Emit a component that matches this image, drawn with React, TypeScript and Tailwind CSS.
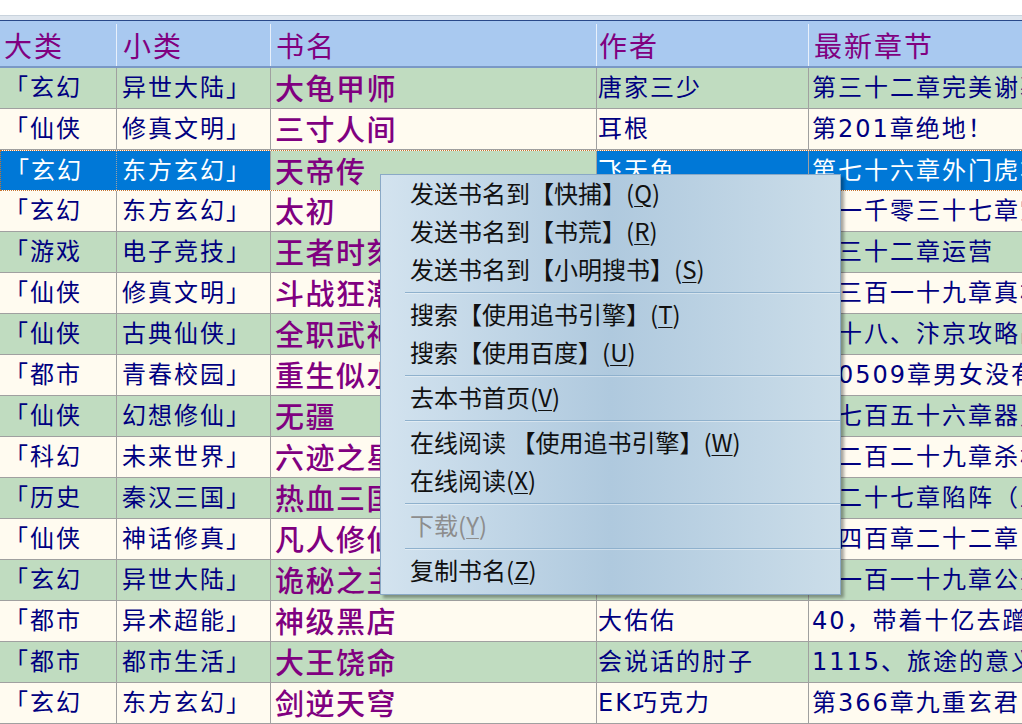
import React from 'react';

type Row = [string, string, string, string, string];

const rows: Row[] = [
  ['「玄幻', '异世大陆」', '大龟甲师', '唐家三少', '第三十二章完美谢幕'],
  ['「仙侠', '修真文明」', '三寸人间', '耳根', '第201章绝地！'],
  ['「玄幻', '东方玄幻」', '天帝传', '飞天鱼', '第七十六章外门虎将'],
  ['「玄幻', '东方玄幻」', '太初', '高楼大厦', '第一千零三十七章空间'],
  ['「游戏', '电子竞技」', '王者时刻', '蝴蝶蓝', '第三十二章运营'],
  ['「仙侠', '修真文明」', '斗战狂潮', '骷髅精灵', '第三百一十九章真相'],
  ['「仙侠', '古典仙侠」', '全职武神', '乱世狂刀', '第十八、汴京攻略战'],
  ['「都市', '青春校园」', '重生似水', '青衫取醉', '第0509章男女没有'],
  ['「仙侠', '幻想修仙」', '无疆', '小刀锋利', '第七百五十六章器灵'],
  ['「科幻', '未来世界」', '六迹之星', '夜箫', '第二百二十九章杀机'],
  ['「历史', '秦汉三国」', '热血三国', '寂寞剑客', '第二十七章陷阵（上）'],
  ['「仙侠', '神话修真」', '凡人修仙传', '忘语', '第四百章二十二章'],
  ['「玄幻', '异世大陆」', '诡秘之主', '爱潜水的乌贼', '第一百一十九章公开'],
  ['「都市', '异术超能」', '神级黑店', '大佑佑', '40，带着十亿去蹭饭'],
  ['「都市', '都市生活」', '大王饶命', '会说话的肘子', '1115、旅途的意义'],
  ['「玄幻', '东方玄幻」', '剑逆天穹', 'EK巧克力', '第366章九重玄君'],
];

const SELECTED = 2;

type MenuEntry = { label: string; key: string; disabled?: boolean } | 'sep';

const menu: MenuEntry[] = [
  { label: '发送书名到【快捕】(', key: 'Q' },
  { label: '发送书名到【书荒】(', key: 'R' },
  { label: '发送书名到【小明搜书】(', key: 'S' },
  'sep',
  { label: '搜索【使用追书引擎】(', key: 'T' },
  { label: '搜索【使用百度】(', key: 'U' },
  'sep',
  { label: '去本书首页(', key: 'V' },
  'sep',
  { label: '在线阅读 【使用追书引擎】(', key: 'W' },
  { label: '在线阅读(', key: 'X' },
  'sep',
  { label: '下载(', key: 'Y', disabled: true },
  'sep',
  { label: '复制书名(', key: 'Z' },
];

const cols = 'grid grid-cols-[117px_154px_326px_212px_1fr]';

const BookRow = ({ row, index }: { row: Row; index: number }) => {
  const selected = index === SELECTED;
  const bg = index % 2 === 0 ? 'bg-[#c0dcc0]' : 'bg-[#fffbf0]';
  const cell = selected ? 'bg-[#0078d7] text-white' : `${bg} text-[#000080]`;
  const rowBorder = selected
    ? 'border-y border-dotted border-[#c8742c]'
    : 'border-b border-[#a0a0a0]';

  return (
    <div className={`${cols} h-[41px] ${rowBorder} font-['DejaVu_Sans','Noto_Sans_CJK_SC',sans-serif] whitespace-nowrap overflow-hidden`}>
      <div className={`${cell} flex items-center pl-[4px] text-[24px] tracking-[2px] border-r border-[#a0a0a0] ${selected ? 'border-l border-l-[#c8742c] border-dotted' : ''}`}>
        {row[0]}
      </div>
      <div className={`${cell} flex items-center pl-[5px] text-[24px] tracking-[2px] border-r border-[#a0a0a0]`}>
        {row[1]}
      </div>
      <div className={`${bg} flex items-center pl-[4px] text-[29px] tracking-[1.5px] font-medium text-[#800080] border-r border-[#a0a0a0] font-['Noto_Sans_CJK_SC',sans-serif] overflow-hidden`}>
        {row[2]}
      </div>
      <div className={`${cell} flex items-center pl-[1px] text-[24px] tracking-[2px] border-r border-[#a0a0a0] overflow-hidden`}>
        {row[3]}
      </div>
      <div className={`${cell} flex items-center pl-[3px] text-[24px] tracking-[2px] overflow-hidden`}>
        {row[4]}
      </div>
    </div>
  );
};

const ContextMenu = () => (
  <div className="absolute left-[380px] top-[174px] w-[461px] pb-[4px] border border-[#8aa9c6] bg-gradient-to-r from-[#d3e3ef] via-[#afc9de] to-[#cbdde9] shadow-[3px_3px_3px_rgba(0,0,0,0.35)] font-['Noto_Sans_CJK_SC',sans-serif]">
    {menu.map((m, i) =>
      m === 'sep' ? (
        <div key={i} className="h-[7px] flex flex-col justify-center pl-[24px]">
          <div className="h-px bg-[#8fb1cd]" />
          <div className="h-px bg-white/40" />
        </div>
      ) : (
        <div
          key={i}
          className={`h-[38px] flex items-center pl-[29px] pb-[3px] text-[24px] whitespace-nowrap ${m.disabled ? 'text-[#8d8d8d]' : 'text-[#111]'}`}
        >
          {m.label}
          <span className="underline underline-offset-[3px] decoration-1">{m.key}</span>)
        </div>
      )
    )}
  </div>
);

export default function App() {
  return (
    <div className="relative w-[1022px] h-[724px] overflow-hidden bg-white">
      <div className="h-[15px] bg-white" />
      <div className="h-[5px] bg-[#dfe6ee] border-t border-[#c9d3dd]" />
      <div className={`${cols} h-[48px] bg-[#a9c9f0] border-t border-[#29498a] border-b-2 border-b-[#7a98c6] font-['Noto_Sans_CJK_SC',sans-serif] text-[28px] tracking-[2px] text-[#800080]`}>
        <div className="flex items-center pl-[4px] border-r border-[#e8f0fb] my-[3px]">大类</div>
        <div className="flex items-center pl-[6px] border-r border-[#e8f0fb] my-[3px]">小类</div>
        <div className="flex items-center pl-[5px] border-r border-[#e8f0fb] my-[3px]">书名</div>
        <div className="flex items-center pl-[2px] border-r border-[#e8f0fb] my-[3px]">作者</div>
        <div className="flex items-center pl-[5px] my-[3px]">最新章节</div>
      </div>
      {rows.map((r, i) => (
        <BookRow key={i} row={r} index={i} />
      ))}
      <ContextMenu />
    </div>
  );
}
